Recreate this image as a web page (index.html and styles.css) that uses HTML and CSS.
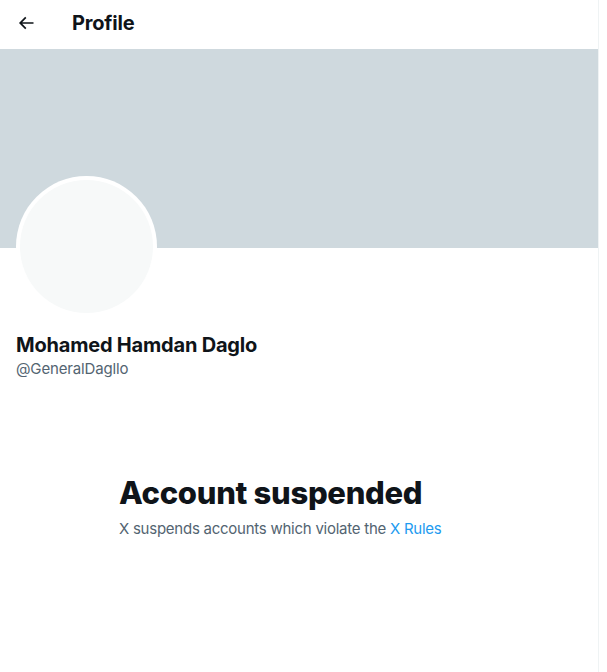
FILE: index.html
```html
<!DOCTYPE html>
<html lang="en">
<head>
<meta charset="utf-8">
<link rel="stylesheet" href="styles.css">
</head>
<body>
<main class="column">
  <header class="topbar">
    <button class="back" aria-label="Back">
      <svg viewBox="0 0 24 24" width="20" height="20"><path d="M7.414 13l5.043 5.04-1.414 1.42L3.586 12l7.457-7.46 1.414 1.42L7.414 11H21v2H7.414z" fill="#0f1419"/></svg>
    </button>
    <h1 class="title">Profile</h1>
  </header>
  <div class="banner"></div>
  <div class="profile">
    <div class="avatar"><div class="avatar-inner"></div></div>
    <div class="name">Mohamed Hamdan Daglo</div>
    <div class="handle">@GeneralDagllo</div>
  </div>
  <section class="suspended">
    <h2 class="s-title">Account suspended</h2>
    <p class="s-text">X suspends accounts which violate the <a href="#" class="link">X Rules</a></p>
  </section>
</main>
</body>
</html>
```
FILE: styles.css
```css
* { box-sizing: border-box; }
html, body { margin: 0; padding: 0; background: #fff; }
body {
  font-family: "Inter", "Roboto", "Liberation Sans", sans-serif;
  color: #0f1419;
}
.column {
  width: 599px;
  min-height: 672px;
  border-right: 1px solid #eff3f4;
}
.topbar {
  height: 49px;
  display: flex;
  align-items: center;
  padding: 0 16px 4px;
}
.back {
  width: 20px;
  height: 20px;
  padding: 0;
  margin: 0 36px 0 0;
  border: 0;
  background: none;
  display: flex;
}
.title {
  margin: 0;
  font-size: 20px;
  font-weight: 700;
  letter-spacing: -0.2px;
}
.banner {
  height: 199px;
  background: #cfd9de;
}
.profile {
  padding: 0 16px;
}
.avatar {
  width: 141px;
  height: 141px;
  border-radius: 50%;
  background: #fff;
  padding: 4px;
  margin-top: -72px;
}
.avatar-inner {
  width: 100%;
  height: 100%;
  border-radius: 50%;
  background: #f7f9f9;
}
.name {
  margin-top: 16px;
  font-size: 20px;
  font-weight: 700;
  line-height: 24px;
  letter-spacing: -0.2px;
}
.handle {
  margin-top: 2px;
  font-size: 15px;
  line-height: 20px;
  color: #536471;
  letter-spacing: -0.15px;
}
.suspended {
  padding: 96px 0 0 119px;
}
.s-title {
  margin: 0;
  font-size: 31px;
  font-weight: 800;
  line-height: 36px;
  letter-spacing: -0.3px;
}
.s-text {
  margin: 8px 0 0;
  font-size: 15px;
  line-height: 20px;
  color: #536471;
  letter-spacing: -0.25px;
}
.link {
  color: #1d9bf0;
  text-decoration: none;
}
```
